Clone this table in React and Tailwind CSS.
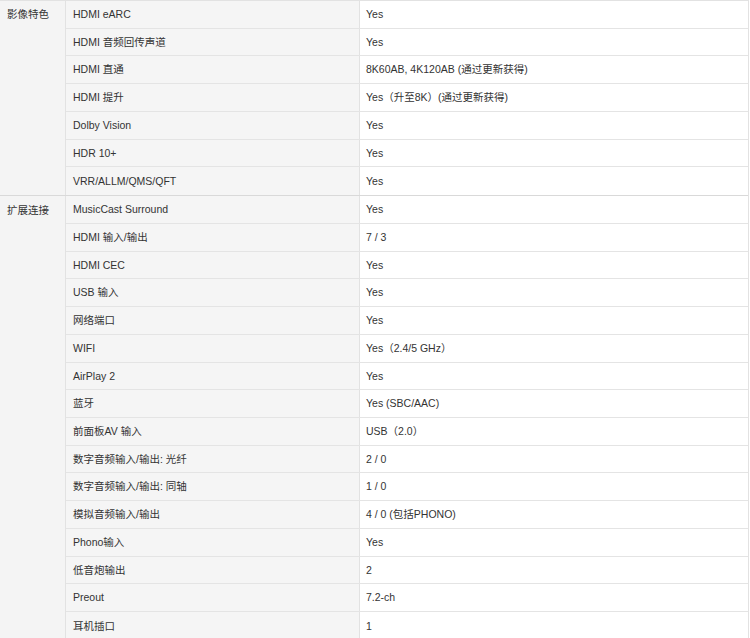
const sections = [
  {
    title: "影像特色",
    rows: [
      ["HDMI eARC", "Yes"],
      ["HDMI 音频回传声道", "Yes"],
      ["HDMI 直通", "8K60AB, 4K120AB (通过更新获得)"],
      ["HDMI 提升", "Yes（升至8K）(通过更新获得)"],
      ["Dolby Vision", "Yes"],
      ["HDR 10+", "Yes"],
      ["VRR/ALLM/QMS/QFT", "Yes"],
    ],
  },
  {
    title: "扩展连接",
    rows: [
      ["MusicCast Surround", "Yes"],
      ["HDMI 输入/输出", "7 / 3"],
      ["HDMI CEC", "Yes"],
      ["USB 输入", "Yes"],
      ["网络端口", "Yes"],
      ["WIFI", "Yes（2.4/5 GHz）"],
      ["AirPlay 2", "Yes"],
      ["蓝牙", "Yes (SBC/AAC)"],
      ["前面板AV 输入", "USB（2.0）"],
      ["数字音频输入/输出: 光纤", "2 / 0"],
      ["数字音频输入/输出: 同轴", "1 / 0"],
      ["模拟音频输入/输出", "4 / 0 (包括PHONO)"],
      ["Phono输入", "Yes"],
      ["低音炮输出", "2"],
      ["Preout", "7.2-ch"],
      ["耳机插口", "1"],
    ],
  },
];

export default function App() {
  return (
    <div
      className="w-[750px] h-[638px] overflow-hidden bg-white text-[10.5px] text-[#333333]"
      style={{ fontFamily: '"Liberation Sans", Arial, "Noto Sans CJK SC", sans-serif' }}
    >
      <div className="w-[749px] border-r border-t border-[#e2e2e2] flex flex-col">
        {sections.map((s, si) => (
          <div key={si} className="flex border-b border-[#d9d9d9]">
            <div className="w-[66px] shrink-0 bg-[#f4f4f4] border-r border-[#e2e2e2] pl-[7px]">
              <div className="h-[27.74px] pt-[1px] flex items-center">{s.title}</div>
            </div>
            <div className="flex-1 flex flex-col">
              {s.rows.map((r, ri) => (
                <div
                  key={ri}
                  className={
                    "flex h-[27.74px] " +
                    (ri < s.rows.length - 1 ? "border-b border-[#e4e4e4]" : "")
                  }
                >
                  <div className="w-[294px] shrink-0 bg-[#f5f5f5] border-r border-[#e2e2e2] pl-[7px] pt-[1px] flex items-center">
                    {r[0]}
                  </div>
                  <div className="flex-1 bg-white pl-[6px] pt-[1px] flex items-center">{r[1]}</div>
                </div>
              ))}
            </div>
          </div>
        ))}
      </div>
    </div>
  );
}
